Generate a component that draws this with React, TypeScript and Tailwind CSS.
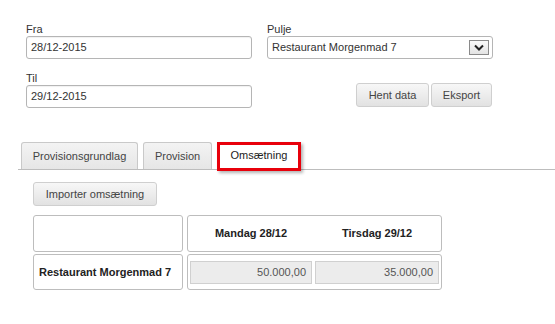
import React from 'react';

const btn =
  'h-[24px] rounded-[3px] border border-[#cfcfcf] bg-linear-to-b from-[#f7f7f7] to-[#e2e2e2] text-[11px] text-[#444]';

function Field({ label, value }: { label: string; value: string }) {
  return (
    <div className="flex flex-col">
      <label className="h-[12px] text-[11px] leading-[12px] text-[#333]">{label}</label>
      <div className="mt-[1px] flex h-[23px] w-[226px] items-center rounded-[3px] border border-[#b5b5b5] px-[4px] text-[11px] text-[#333] shadow-[inset_0_1px_1px_rgba(0,0,0,0.06)]">
        {value}
      </div>
    </div>
  );
}

export default function App() {
  return (
    <div className="h-[324px] w-[555px] overflow-hidden bg-white font-['Liberation_Sans',Arial,sans-serif] text-[11px] text-[#333]">
      {/* Filter form */}
      <div className="flex gap-[15px] pl-[26px] pt-[23px]">
        <div className="flex flex-col gap-[13px]">
          <Field label="Fra" value="28/12-2015" />
          <Field label="Til" value="29/12-2015" />
        </div>
        <div className="flex w-[226px] flex-col">
          <label className="h-[12px] text-[11px] leading-[12px]">Pulje</label>
          <div className="mt-[1px] flex h-[23px] items-center justify-between rounded-[3px] border border-[#b5b5b5] pl-[4px] pr-[3px]">
            <span>Restaurant Morgenmad 7</span>
            <div className="flex h-[15px] w-[20px] items-center justify-center border border-[#8a8a8a] bg-linear-to-b from-[#fafafa] to-[#e4e4e4]">
              <svg width="10" height="7" viewBox="0 0 10 7">
                <path d="M1 1.5 L5 5.5 L9 1.5" fill="none" stroke="#222" strokeWidth="2" />
              </svg>
            </div>
          </div>
          <div className="mt-[24px] flex justify-end gap-[2px] pr-[1px]">
            <button className={`${btn} w-[73px]`}>Hent data</button>
            <button className={`${btn} w-[61px]`}>Eksport</button>
          </div>
        </div>
      </div>

      {/* Tabs */}
      <div className="ml-[18px] mt-[35px] flex h-[27px] items-end gap-[5px] border-b border-[#bdbdbd] pl-[3px]">
        <div className="flex h-[27px] w-[117px] items-center justify-center rounded-t-[3px] border border-b-0 border-[#c9c9c9] bg-linear-to-b from-[#f3f3f3] to-[#e6e6e6] text-[#444]">
          Provisionsgrundlag
        </div>
        <div className="flex h-[27px] w-[69px] items-center justify-center rounded-t-[3px] border border-b-0 border-[#c9c9c9] bg-linear-to-b from-[#f3f3f3] to-[#e6e6e6] text-[#444]">
          Provision
        </div>
        <div className="relative -mb-[2px] flex h-[29px] w-[84px] items-center justify-center border-[3px] border-[#e8000b] bg-white pb-[2px] text-[#222] shadow-[2px_2px_3px_rgba(0,0,0,0.3)]">
          Omsætning
        </div>
      </div>

      {/* Content */}
      <div className="pl-[33px] pt-[12px]">
        <button className={`${btn} h-[23px] w-[124px]`}>Importer omsætning</button>

        <div className="mt-[9px] grid grid-cols-[150px_255px] gap-x-[4px] gap-y-[2px]">
          <div className="h-[37px] rounded-[3px] border border-[#bdbdbd]" />
          <div className="flex h-[37px] items-center rounded-[3px] border border-[#bdbdbd] font-bold text-[#222]">
            <div className="w-[126px] text-center">Mandag 28/12</div>
            <div className="w-[126px] text-center">Tirsdag 29/12</div>
          </div>
          <div className="flex h-[36px] items-center rounded-[3px] border border-[#bdbdbd] pl-[5px] font-bold text-[#222]">
            Restaurant Morgenmad 7
          </div>
          <div className="flex h-[36px] items-center gap-[3px] rounded-[3px] border border-[#bdbdbd] px-[2px]">
            <div className="flex h-[23px] w-[122px] items-center justify-end border border-[#d0d0d0] bg-[#ececec] pr-[5px] text-[#555]">
              50.000,00
            </div>
            <div className="flex h-[23px] w-[124px] items-center justify-end border border-[#d0d0d0] bg-[#ececec] pr-[5px] text-[#555]">
              35.000,00
            </div>
          </div>
        </div>
      </div>
    </div>
  );
}
